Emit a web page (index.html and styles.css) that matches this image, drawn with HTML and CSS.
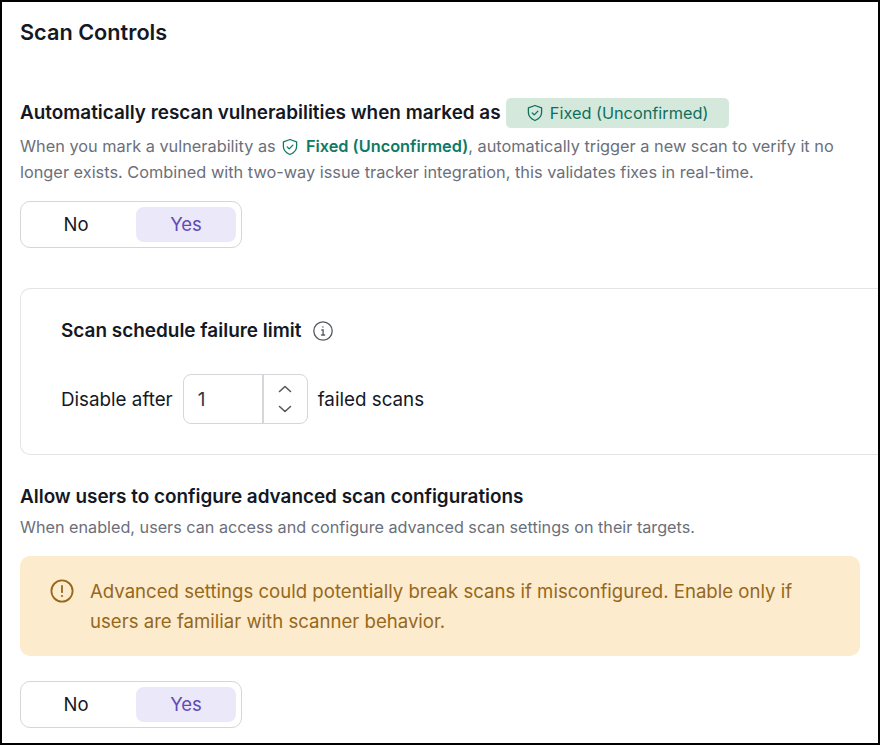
FILE: index.html
```html
<!DOCTYPE html>
<html lang="en">
<head>
  <meta charset="UTF-8"/>
  <meta name="viewport" content="width=device-width, initial-scale=1.0"/>
  <title>Scan Controls</title>
  <link rel="stylesheet" href="styles.css">
</head>
<body>
  <div class="frame">
    <h1 class="page-title">Scan Controls</h1>

    <!-- Rescan -->
    <div class="rescan">
      <div class="setting-title">
        <span>Automatically rescan vulnerabilities when marked as</span>
        <span class="status-pill">
          <svg class="shield-lg" viewBox="0 0 18 18" fill="none" stroke="currentColor" stroke-width="1.3" stroke-linecap="round" stroke-linejoin="round"><path d="M9 1.5 15.6 3.8v4.8c0 3.7-2.8 6.4-6.6 7.9-3.8-1.5-6.6-4.2-6.6-7.9V3.8z"/><path d="m6.2 8.9 2 2 3.7-3.8"/></svg>
          Fixed (Unconfirmed)
        </span>
      </div>
      <p class="setting-desc rescan-desc">When you mark a vulnerability as <svg class="shield-sm" viewBox="0 0 18 18" fill="none" stroke="currentColor" stroke-width="1.3" stroke-linecap="round" stroke-linejoin="round"><path d="M9 1.5 15.6 3.8v4.8c0 3.7-2.8 6.4-6.6 7.9-3.8-1.5-6.6-4.2-6.6-7.9V3.8z"/><path d="m6.2 8.9 2 2 3.7-3.8"/></svg> <b class="status-inline">Fixed (Unconfirmed)</b>, automatically trigger a new scan to verify it no longer exists. Combined with two-way issue tracker integration, this validates fixes in real-time.</p>
      <div class="toggle">
        <button class="toggle-opt">No</button>
        <button class="toggle-opt active">Yes</button>
      </div>
    </div>

    <!-- Failure limit -->
    <div class="limit-card">
      <div class="limit-title">
        <span>Scan schedule failure limit</span>
        <svg class="info-icon" viewBox="0 0 20 20" fill="none" stroke="currentColor" stroke-width="1.3" stroke-linecap="round"><circle cx="10" cy="10" r="9.2"/><path d="M8.8 9h1.3v5M8.6 14h3"/><circle cx="9.9" cy="6" r=".7" fill="currentColor" stroke="none"/></svg>
      </div>
      <div class="limit-row">
        <span>Disable after</span>
        <div class="stepper">
          <span class="stepper-value">1</span>
          <div class="stepper-arrows">
            <svg viewBox="0 0 14 8" fill="none" stroke="currentColor" stroke-width="1.6" stroke-linecap="round" stroke-linejoin="round"><path d="m1.5 6.5 5.5-5 5.5 5"/></svg>
            <svg viewBox="0 0 14 8" fill="none" stroke="currentColor" stroke-width="1.6" stroke-linecap="round" stroke-linejoin="round"><path d="m1.5 1.5 5.5 5 5.5-5"/></svg>
          </div>
        </div>
        <span>failed scans</span>
      </div>
    </div>

    <!-- Advanced -->
    <div class="setting-title advanced-title">Allow users to configure advanced scan configurations</div>
    <p class="setting-desc">When enabled, users can access and configure advanced scan settings on their targets.</p>
    <div class="warning">
      <svg class="warning-icon" viewBox="0 0 24 24" fill="none" stroke="currentColor" stroke-width="1.8" stroke-linecap="round"><circle cx="12" cy="12" r="10.6"/><path d="M12 6.8v6.4"/><circle cx="12" cy="17" r="1.1" fill="currentColor" stroke="none"/></svg>
      <span>Advanced settings could potentially break scans if misconfigured. Enable only if users are familiar with scanner behavior.</span>
    </div>
    <div class="toggle toggle-last">
      <button class="toggle-opt">No</button>
      <button class="toggle-opt active">Yes</button>
    </div>
  </div>
</body>
</html>
```

FILE: styles.css
```css
* {
  box-sizing: border-box;
}

body {
  margin: 0;
  font-family: Inter, sans-serif;
  color: #141824;
  background-color: #fff;
}

.frame {
  width: 880px;
  height: 745px;
  border: 2px solid #000;
  padding: 0 0 0 18px;
  overflow: hidden;
}

.page-title {
  margin: 17px 0 0;
  font-size: 21.7px;
  line-height: 26px;
  font-weight: 600;
}

.rescan {
  margin-top: 53px;
  padding-bottom: 40px;
}

.setting-title {
  display: flex;
  align-items: center;
  gap: 5px;
  font-size: 18.9px;
  line-height: 30px;
  font-weight: 600;
}

.status-pill {
  display: flex;
  align-items: center;
  justify-content: center;
  gap: 6px;
  width: 223px;
  height: 30px;
  border-radius: 5px;
  background-color: #d4e9dc;
  color: #0f6e5c;
  font-size: 16.3px;
  font-weight: 400;
}

.shield-lg {
  width: 18px;
  height: 18px;
}

.shield-sm {
  width: 18px;
  height: 18px;
  margin: 0 2px 0 1px;
  color: #0f7a63;
  vertical-align: -4px;
}

.status-inline {
  color: #0f7a63;
  font-weight: 600;
}

.setting-desc {
  margin: 5px 0 0;
  width: 840px;
  font-size: 16.2px;
  line-height: 26px;
  color: #6b6f7a;
}

.rescan-desc {
  font-size: 16.32px;
}

.toggle {
  display: flex;
  align-items: center;
  width: 222px;
  height: 47px;
  margin-top: 16px;
  padding: 5px;
  border: 1px solid #d6d6da;
  border-radius: 10px;
  background-color: #fff;
}

.toggle-last {
  margin-top: 25px;
}

.toggle-opt {
  height: 35px;
  width: 100px;
  padding: 0 0 2px;
  border: none;
  border-radius: 8px;
  background: none;
  font-family: inherit;
  font-size: 18.5px;
  color: #141824;
}

.toggle-opt:first-child {
  width: 110px;
  padding-right: 10px;
}

.toggle-opt.active {
  background-color: #ebe8f9;
  color: #5f4bb6;
}

.limit-card {
  height: 167px;
  margin-right: -10px;
  padding: 28px 40px 0;
  border: 1px solid #e4e4e7;
  border-right: none;
  border-radius: 10px 0 0 10px;
}

.limit-title {
  display: flex;
  align-items: center;
  gap: 12px;
  font-size: 18.95px;
  line-height: 28px;
  font-weight: 600;
}

.info-icon {
  width: 20px;
  height: 20px;
  color: #55585f;
}

.limit-row {
  display: flex;
  align-items: center;
  gap: 10px;
  margin-top: 29px;
  font-size: 18.8px;
}

.stepper {
  display: flex;
  width: 125px;
  height: 50px;
  border: 1px solid #d6d6da;
  border-radius: 8px;
}

.stepper-value {
  display: flex;
  align-items: center;
  width: 80px;
  padding-left: 14px;
  border-right: 2px solid #d6d6da;
  color: #33363f;
}

.stepper-arrows {
  display: flex;
  flex: 1;
  flex-direction: column;
  align-items: center;
  justify-content: center;
  gap: 12px;
  color: #55585f;
}

.stepper-arrows svg {
  width: 14px;
  height: 8px;
}

.advanced-title {
  margin-top: 27px;
}

.advanced-title + .setting-desc {
  margin-top: 2px;
}

.warning {
  display: flex;
  gap: 16px;
  width: 840px;
  height: 100px;
  margin-top: 16px;
  padding: 20px 28px 20px 30px;
  border-radius: 10px;
  background-color: #fdebcd;
  color: #96681c;
  font-size: 18.6px;
  line-height: 30px;
}

.warning-icon {
  flex: none;
  width: 24px;
  height: 24px;
  margin-top: 3px;
}
```
